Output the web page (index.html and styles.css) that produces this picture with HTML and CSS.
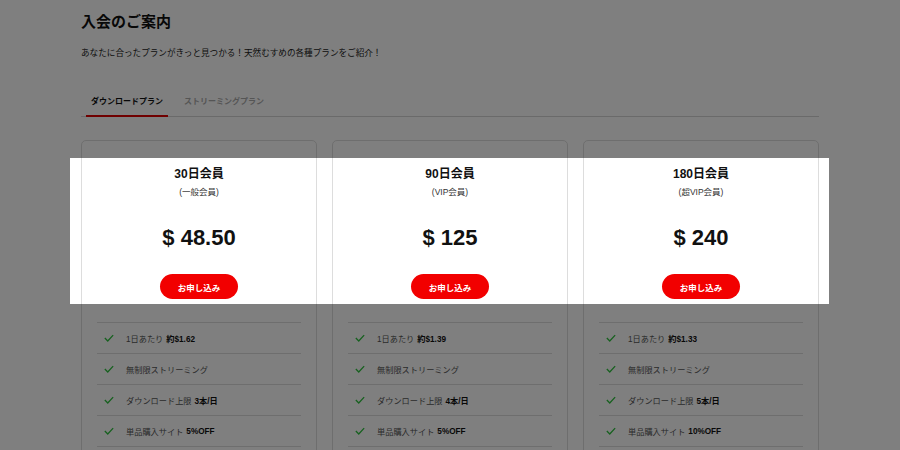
FILE: index.html
```html
<!DOCTYPE html>
<html lang="ja">
<head>
    <meta charset="UTF-8">
    <meta name="viewport" content="width=device-width, initial-scale=1.0">
    <title>入会のご案内</title>
    <link rel="stylesheet" href="styles.css">
</head>
<body>
    <div class="wrap">
        <h1 class="title">入会のご案内</h1>
        <p class="lead">あなたに合ったプランがきっと見つかる！天然むすめの各種プランをご紹介！</p>

        <div class="tabs">
            <span class="tab active">ダウンロードプラン</span>
            <span class="tab">ストリーミングプラン</span>
        </div>

        <div class="plans">
            <div class="card">
                <h2 class="plan-name">30日会員</h2>
                <p class="plan-type">(一般会員)</p>
                <p class="price">$ 48.50</p>
                <button class="apply">お申し込み</button>
                <ul class="features">
                    <li><svg class="check" viewBox="0 0 12 9"><polyline points="1,4.5 4.5,8 11,1"/></svg>1日あたり <b>約$1.62</b></li>
                    <li><svg class="check" viewBox="0 0 12 9"><polyline points="1,4.5 4.5,8 11,1"/></svg>無制限ストリーミング</li>
                    <li><svg class="check" viewBox="0 0 12 9"><polyline points="1,4.5 4.5,8 11,1"/></svg>ダウンロード上限 <b>3本/日</b></li>
                    <li><svg class="check" viewBox="0 0 12 9"><polyline points="1,4.5 4.5,8 11,1"/></svg>単品購入サイト <b>5%OFF</b></li>
                </ul>
            </div>
            <div class="card">
                <h2 class="plan-name">90日会員</h2>
                <p class="plan-type">(VIP会員)</p>
                <p class="price">$ 125</p>
                <button class="apply">お申し込み</button>
                <ul class="features">
                    <li><svg class="check" viewBox="0 0 12 9"><polyline points="1,4.5 4.5,8 11,1"/></svg>1日あたり <b>約$1.39</b></li>
                    <li><svg class="check" viewBox="0 0 12 9"><polyline points="1,4.5 4.5,8 11,1"/></svg>無制限ストリーミング</li>
                    <li><svg class="check" viewBox="0 0 12 9"><polyline points="1,4.5 4.5,8 11,1"/></svg>ダウンロード上限 <b>4本/日</b></li>
                    <li><svg class="check" viewBox="0 0 12 9"><polyline points="1,4.5 4.5,8 11,1"/></svg>単品購入サイト <b>5%OFF</b></li>
                </ul>
            </div>
            <div class="card">
                <h2 class="plan-name">180日会員</h2>
                <p class="plan-type">(超VIP会員)</p>
                <p class="price">$ 240</p>
                <button class="apply">お申し込み</button>
                <ul class="features">
                    <li><svg class="check" viewBox="0 0 12 9"><polyline points="1,4.5 4.5,8 11,1"/></svg>1日あたり <b>約$1.33</b></li>
                    <li><svg class="check" viewBox="0 0 12 9"><polyline points="1,4.5 4.5,8 11,1"/></svg>無制限ストリーミング</li>
                    <li><svg class="check" viewBox="0 0 12 9"><polyline points="1,4.5 4.5,8 11,1"/></svg>ダウンロード上限 <b>5本/日</b></li>
                    <li><svg class="check" viewBox="0 0 12 9"><polyline points="1,4.5 4.5,8 11,1"/></svg>単品購入サイト <b>10%OFF</b></li>
                </ul>
            </div>
        </div>
    </div>

    <!-- tour spotlight over the plan headers -->
    <div class="spotlight"></div>
</body>
</html>
```

FILE: styles.css
```css
body { margin: 0; position: relative; overflow: hidden; background: #fff; color: #111; font-family: "Liberation Sans", "Noto Sans CJK JP", sans-serif; }
.wrap { width: 738px; margin: 0 auto; padding-top: 12px; }
.title { margin: 0; font-size: 15px; line-height: 20px; font-weight: bold; }
.lead { margin: 15px 0 0; font-size: 8.6px; line-height: 12px; color: #222; }

.tabs { display: flex; margin-top: 28px; border-bottom: 1px solid #d4d4d4; }
.tab { font-size: 8px; line-height: 12px; padding: 9px 5px 7px; color: #aaa; font-weight: bold; margin-bottom: -1px; border-bottom: 2px solid transparent; }
.tab.active { color: #111; border-bottom-color: #e00000; margin-left: 5px; margin-right: 11px; }

.plans { display: grid; grid-template-columns: repeat(3, 1fr); gap: 15px; margin-top: 23px; }
.card { border: 1px solid #ddd; border-radius: 5px; padding: 25px 15px 40px; text-align: center; }
.plan-name { margin: 0; font-size: 12px; line-height: 16px; font-weight: bold; }
.plan-type { margin: 4px 0 0; font-size: 8.5px; line-height: 12px; color: #333; }
.price { margin: 27px 0 0; font-size: 22px; line-height: 26px; font-weight: bold; }
.apply { display: block; margin: 23px auto 0; width: 78px; height: 25px; border: none; border-radius: 13px; background: #f20000; color: #fff; font-family: inherit; font-size: 8.5px; font-weight: bold; padding: 0; }

.features { list-style: none; margin: 23px 0 0; padding: 0; border-top: 1px solid #ddd; text-align: left; }
.features li { display: flex; align-items: center; height: 30px; border-bottom: 1px solid #ddd; font-size: 8.2px; color: #555; }
.features b { color: #111; margin-left: 3px; }
.check { width: 10px; height: 8px; margin: 0 12px 0 7px; fill: none; stroke: #2ec23e; stroke-width: 1.6; }

.spotlight { position: absolute; left: 70px; top: 158px; width: 759px; height: 146px; box-shadow: 0 0 0 2000px rgba(0, 0, 0, 0.5); pointer-events: none; }
```
